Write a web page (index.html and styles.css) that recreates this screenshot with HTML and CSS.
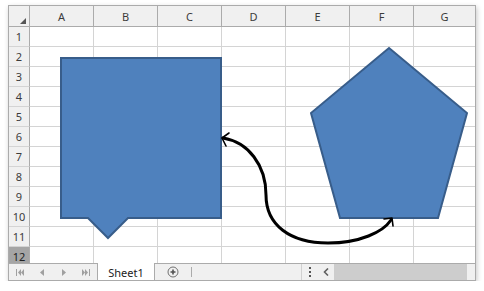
FILE: index.html
```html
<!DOCTYPE html>
<html>
<head>
<meta charset="utf-8">
<link rel="stylesheet" href="styles.css">
</head>
<body>
<div class="sheet">
  <div class="grid">
    <div class="row head">
      <div class="corner"><span class="tri"></span></div>
      <div class="ch">A</div><div class="ch">B</div><div class="ch">C</div><div class="ch">D</div><div class="ch">E</div><div class="ch">F</div><div class="ch last">G</div>
    </div>
    <div class="row"><div class="rh">1</div><div class="c"></div><div class="c"></div><div class="c"></div><div class="c"></div><div class="c"></div><div class="c"></div><div class="c last"></div></div>
    <div class="row"><div class="rh">2</div><div class="c"></div><div class="c"></div><div class="c"></div><div class="c"></div><div class="c"></div><div class="c"></div><div class="c last"></div></div>
    <div class="row"><div class="rh">3</div><div class="c"></div><div class="c"></div><div class="c"></div><div class="c"></div><div class="c"></div><div class="c"></div><div class="c last"></div></div>
    <div class="row"><div class="rh">4</div><div class="c"></div><div class="c"></div><div class="c"></div><div class="c"></div><div class="c"></div><div class="c"></div><div class="c last"></div></div>
    <div class="row"><div class="rh">5</div><div class="c"></div><div class="c"></div><div class="c"></div><div class="c"></div><div class="c"></div><div class="c"></div><div class="c last"></div></div>
    <div class="row"><div class="rh">6</div><div class="c"></div><div class="c"></div><div class="c"></div><div class="c"></div><div class="c"></div><div class="c"></div><div class="c last"></div></div>
    <div class="row"><div class="rh">7</div><div class="c"></div><div class="c"></div><div class="c"></div><div class="c"></div><div class="c"></div><div class="c"></div><div class="c last"></div></div>
    <div class="row"><div class="rh">8</div><div class="c"></div><div class="c"></div><div class="c"></div><div class="c"></div><div class="c"></div><div class="c"></div><div class="c last"></div></div>
    <div class="row"><div class="rh">9</div><div class="c"></div><div class="c"></div><div class="c"></div><div class="c"></div><div class="c"></div><div class="c"></div><div class="c last"></div></div>
    <div class="row"><div class="rh">10</div><div class="c"></div><div class="c"></div><div class="c"></div><div class="c"></div><div class="c"></div><div class="c"></div><div class="c last"></div></div>
    <div class="row"><div class="rh">11</div><div class="c"></div><div class="c"></div><div class="c"></div><div class="c"></div><div class="c"></div><div class="c"></div><div class="c last"></div></div>
    <div class="row"><div class="rh sel">12</div><div class="c"></div><div class="c"></div><div class="c"></div><div class="c"></div><div class="c"></div><div class="c"></div><div class="c last"></div></div>

    <svg class="drawing" width="466" height="257" viewBox="0 0 466 257">
      <g transform="translate(-9 -6)">
        <path d="M61,58 H221 V218 H128 L108,238 L88,218 H61 Z" fill="#4f81bd" stroke="#385d8a" stroke-width="2" stroke-linejoin="miter"/>
        <path d="M389,48 L467,113 L438,218 H340 L311,113 Z" fill="#4f81bd" stroke="#385d8a" stroke-width="2" stroke-linejoin="miter"/>
        <path d="M223,138 C248,142 266,165 266,195 C266,225 290,243 328,243 C360,243 383,232 391,220" fill="none" stroke="#000" stroke-width="3" stroke-linecap="round"/>
        <path d="M229,133 L222,138 L226,146" fill="none" stroke="#000" stroke-width="1.6" stroke-linecap="round" stroke-linejoin="round"/>
        <path d="M384,219 L392,218 L393,226" fill="none" stroke="#000" stroke-width="1.6" stroke-linecap="round" stroke-linejoin="round"/>
      </g>
    </svg>
  </div>
  <div class="tabbar">
    <div class="nav">
      <div class="navbtn">
        <svg width="9" height="7" viewBox="0 0 9 7"><rect x="0" y="0" width="1" height="7" fill="#a0a0a0"/><path d="M5,0 L2,3.5 L5,7 Z M8,0 L5,3.5 L8,7 Z" fill="#a0a0a0"/></svg>
      </div>
      <div class="navbtn">
        <svg width="4" height="7" viewBox="0 0 4 7"><path d="M4,0 L0,3.5 L4,7 Z" fill="#a0a0a0"/></svg>
      </div>
      <div class="navbtn">
        <svg width="4" height="7" viewBox="0 0 4 7"><path d="M0,0 L4,3.5 L0,7 Z" fill="#a0a0a0"/></svg>
      </div>
      <div class="navbtn">
        <svg width="9" height="7" viewBox="0 0 9 7"><path d="M0,0 L3,3.5 L0,7 Z M3,0 L6,3.5 L3,7 Z" fill="#a0a0a0"/><rect x="7" y="0" width="1" height="7" fill="#a0a0a0"/></svg>
      </div>
    </div>
    <div class="tab">Sheet1</div>
    <div class="add">
      <svg width="12" height="12" viewBox="0 0 12 12"><circle cx="6" cy="6" r="5" fill="none" stroke="#707070" stroke-width="1"/><path d="M6,3.5 V8.5 M3.5,6 H8.5" stroke="#505050" stroke-width="1.6"/></svg>
    </div>
    <div class="divider"></div>
    <div class="spacer"></div>
    <div class="split"><span></span><span></span><span></span></div>
    <div class="hscroll">
      <div class="arrow">
        <svg width="6" height="8" viewBox="0 0 6 8"><path d="M5,0.5 L1.5,4 L5,7.5" fill="none" stroke="#606060" stroke-width="1.6"/></svg>
      </div>
      <div class="thumb"></div>
      <div class="tail"></div>
    </div>
  </div>
</div>
</body>
</html>
```

FILE: styles.css
```css
* { box-sizing: border-box; }
html, body { margin: 0; padding: 0; background: #fff; }
body { padding: 5px 0 0 8px; font-family: "Noto Sans", "Open Sans", sans-serif; }

.sheet {
  width: 468px;
  height: 276px;
  border: 1px solid #ababab;
  background: #fff;
  box-shadow: 1px 2px 5px rgba(0,0,0,0.22);
  display: flex;
  flex-direction: column;
}

.grid {
  position: relative;
  height: 257px;
  overflow: hidden;
  flex: none;
}

.row {
  display: grid;
  grid-template-columns: 21px repeat(6, 64px) 61px;
  height: 20px;
}
.row.head { height: 21px; }

.ch, .corner {
  background: #f0f0f0;
  border-right: 1px solid #ababab;
  border-bottom: 1px solid #ababab;
  font-size: 11px;
  color: #3c3c3c;
  display: flex;
  align-items: center;
  justify-content: center;
  line-height: 1;
}
.ch.last { border-right: none; }
.corner { position: relative; }
.tri {
  width: 0; height: 0;
  border-left: 6px solid transparent;
  border-bottom: 6px solid #555;
  position: absolute;
  right: 3px;
  bottom: 2px;
}

.rh {
  background: #f0f0f0;
  border-right: 1px solid #ababab;
  border-bottom: 1px solid #d4d4d4;
  font-size: 11px;
  color: #3c3c3c;
  display: flex;
  align-items: center;
  justify-content: center;
  line-height: 1;
}
.rh.sel { background: #a5a5a5; color: #222; }

.c {
  border-right: 1px solid #d4d4d4;
  border-bottom: 1px solid #d4d4d4;
}
.c.last { border-right: none; }

.drawing {
  position: absolute;
  left: 0;
  top: 0;
  overflow: visible;
}

.tabbar {
  height: 17px;
  flex: none;
  display: flex;
  background: #f0f0f0;
  border-top: 1px solid #ababab;
}

.nav {
  display: flex;
  width: 89px;
  border-right: 1px solid #ababab;
}
.navbtn {
  width: 22px;
  display: flex;
  align-items: center;
  justify-content: center;
}

.tab {
  width: 57px;
  background: #fff;
  margin-top: -1px;
  border-right: 1px solid #ababab;
  font-size: 11px;
  color: #222;
  display: flex;
  align-items: center;
  justify-content: center;
  padding-top: 1px;
}

.add {
  width: 36px;
  display: flex;
  align-items: center;
  justify-content: center;
}
.divider {
  width: 1px;
  height: 10px;
  margin-top: 3px;
  background: #ababab;
}
.spacer {
  width: 110px;
  border-right: 1px solid #d0d0d0;
}
.split {
  width: 16px;
  display: flex;
  flex-direction: column;
  align-items: center;
  justify-content: center;
  gap: 2px;
}
.split span {
  width: 2px;
  height: 2px;
  background: #555;
}
.hscroll {
  flex: 1;
  display: flex;
}
.arrow {
  width: 16px;
  display: flex;
  align-items: center;
  justify-content: center;
}
.thumb {
  width: 133px;
  background: #cdcdcd;
}
.tail { flex: 1; }
```
